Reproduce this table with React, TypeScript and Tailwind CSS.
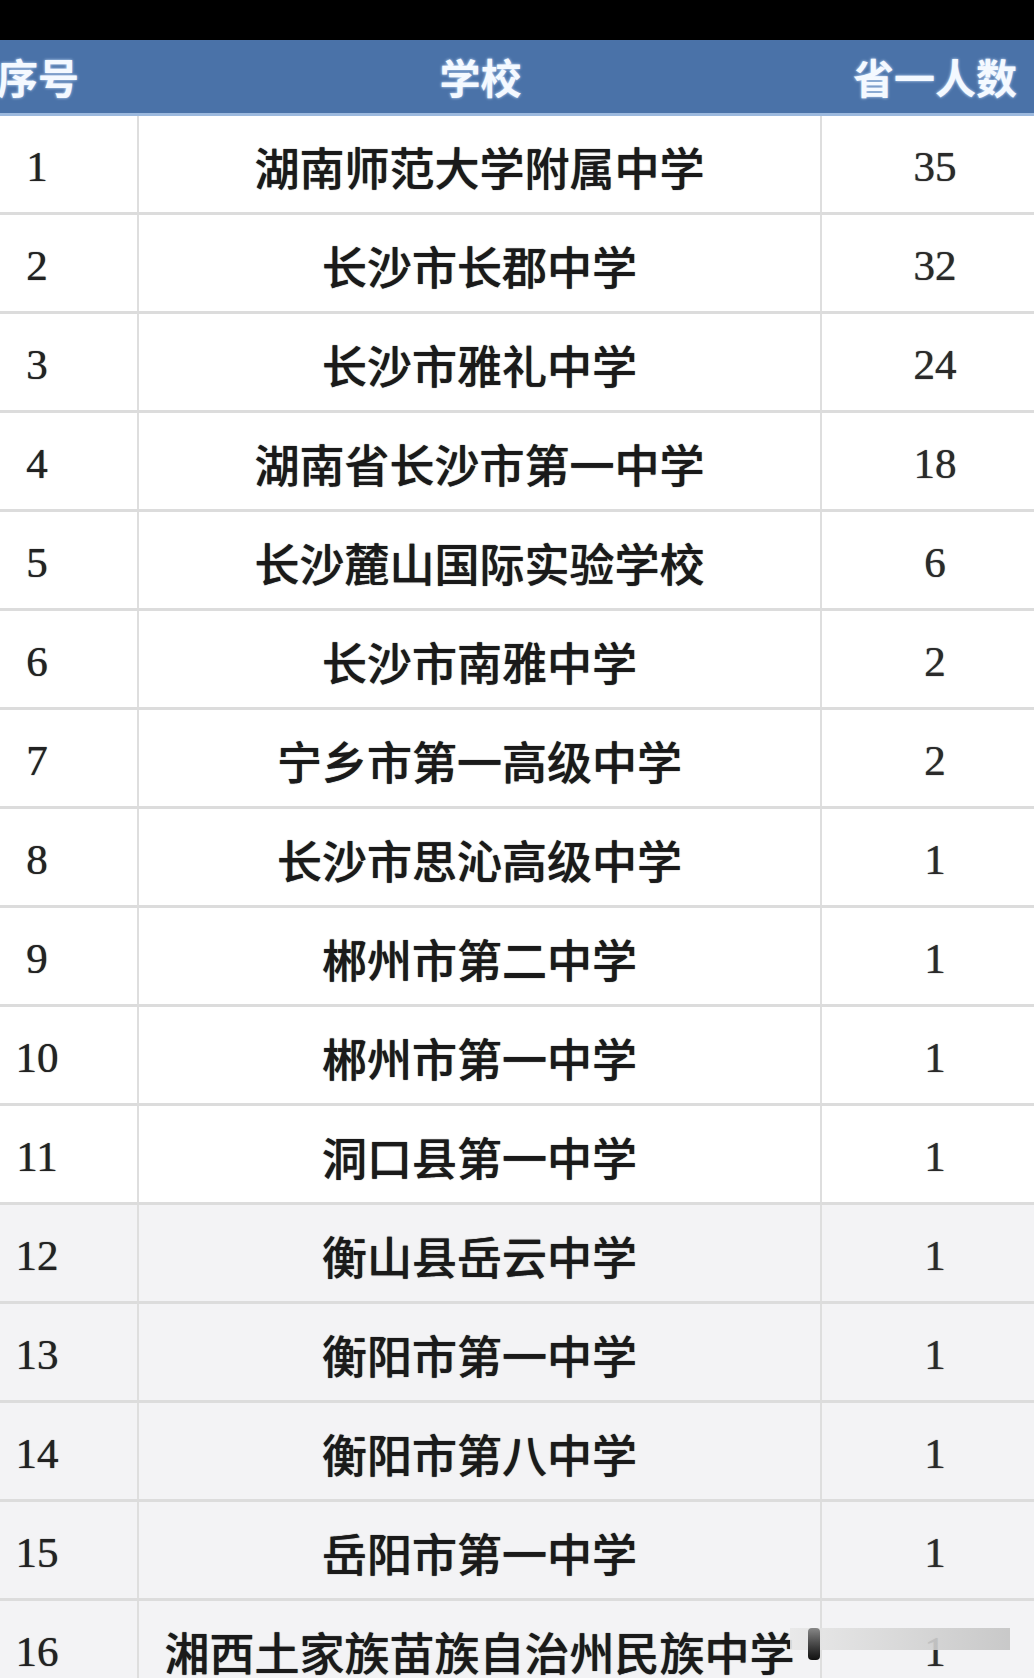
import React from "react";

const rows: [string, string, string][] = [
  ["1", "湖南师范大学附属中学", "35"],
  ["2", "长沙市长郡中学", "32"],
  ["3", "长沙市雅礼中学", "24"],
  ["4", "湖南省长沙市第一中学", "18"],
  ["5", "长沙麓山国际实验学校", "6"],
  ["6", "长沙市南雅中学", "2"],
  ["7", "宁乡市第一高级中学", "2"],
  ["8", "长沙市思沁高级中学", "1"],
  ["9", "郴州市第二中学", "1"],
  ["10", "郴州市第一中学", "1"],
  ["11", "洞口县第一中学", "1"],
  ["12", "衡山县岳云中学", "1"],
  ["13", "衡阳市第一中学", "1"],
  ["14", "衡阳市第八中学", "1"],
  ["15", "岳阳市第一中学", "1"],
  ["16", "湘西土家族苗族自治州民族中学", "1"],
];

const cjk = "font-['Noto_Sans_CJK_SC',sans-serif]";
const serif = "font-['Liberation_Serif','Noto_Sans_CJK_SC',serif]";

export default function App() {
  return (
    <div className="w-[1034px] h-[1678px] overflow-hidden bg-white relative">
      <div className="h-[40px] bg-black" />
      <div className="ml-[-63px] w-[1111px]">
        <div className="grid grid-cols-[202px_683px_226px] h-[76px] bg-[#4a72a8] border-b-[3px] border-[#9cb9de] text-[#f4f9ff] font-bold text-[41px] leading-none">
          <div className={`flex items-center justify-center ${cjk} [text-shadow:0_0_3px_#cfe4ff]`}>序号</div>
          <div className={`flex items-center justify-center ${cjk} [text-shadow:0_0_3px_#cfe4ff]`}>学校</div>
          <div className={`flex items-center justify-center ${cjk} [text-shadow:0_0_3px_#cfe4ff]`}>省一人数</div>
        </div>
        {rows.map(([n, name, c], i) => (
          <div
            key={n}
            className={`grid grid-cols-[202px_683px_226px] h-[99px] border-b-[3px] border-[#dcdcdc] text-[#1e1e1e] ${i >= 11 ? "bg-[#f3f3f5]" : "bg-white"}`}
          >
            <div className={`flex items-center justify-center pt-[4px] border-r-2 border-[#dedede] ${serif} font-normal text-[43px] leading-none text-[#222] [text-shadow:0_0_1px_#333]`}>{n}</div>
            <div className={`flex items-center justify-center pt-[4px] border-r-2 border-[#dedede] ${cjk} font-medium text-[45px] leading-none whitespace-nowrap overflow-visible text-[#1a1a1a] [text-shadow:0_0_1px_#333]`}>{name}</div>
            <div className={`flex items-center justify-center pt-[4px] ${serif} font-normal text-[43px] leading-none text-[#2a2a2a] [text-shadow:0_0_1px_#333]`}>{c}</div>
          </div>
        ))}
      </div>
      <div className="absolute left-[790px] top-[1628px] w-[220px] h-[22px] bg-gradient-to-r from-[#e8e8e8] via-[#d6d6d6] to-[#c4c4c4] opacity-90" />
      <div className="absolute left-[808px] top-[1628px] w-[12px] h-[32px] rounded-sm bg-gradient-to-b from-[#888] to-[#111]" />
    </div>
  );
}
